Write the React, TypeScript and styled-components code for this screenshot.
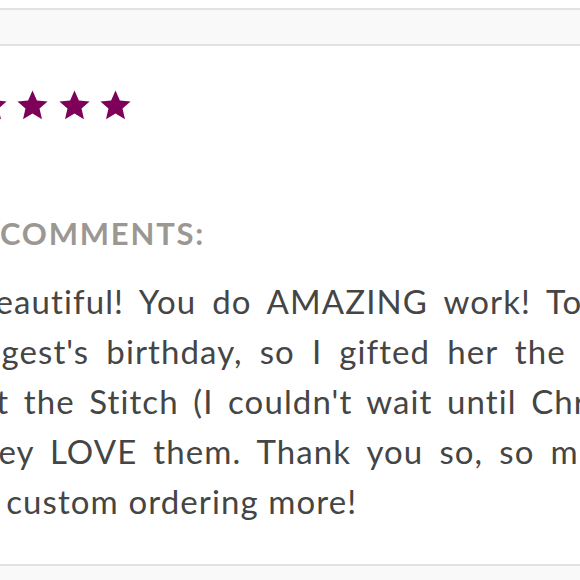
import styled, { createGlobalStyle } from 'styled-components';

const GlobalStyle = createGlobalStyle`
  html, body {
    margin: 0;
    padding: 0;
    background: #ffffff;
    overflow: hidden;
  }
  body {
    font-family: Lato, "Open Sans", Arial, sans-serif;
  }
`;

const Page = styled.div`
  width: 580px;
  height: 580px;
  overflow: hidden;
  display: flex;
  flex-direction: column;
`;

const Strip = styled.div<{ $top?: boolean }>`
  flex: ${(props) => (props.$top ? '0 0 34px' : '1 1 auto')};
  margin-top: ${(props) => (props.$top ? '8px' : '0')};
  background: #f9f9f9;
  border-top: 2px solid #e4e1e0;
  border-bottom: ${(props) => (props.$top ? '2px solid #e4e1e0' : 'none')};
`;

const Review = styled.section`
  display: flex;
  flex-direction: column;
  padding: 43px 0 38px;
  background: #ffffff;
`;

const Stars = styled.div`
  display: flex;
  gap: 8.5px;
  margin-left: -67px;
  height: 33px;
`;

const Star = styled.svg`
  width: 33px;
  height: 33px;
  flex: 0 0 33px;
  fill: #7f0058;
`;

const Label = styled.h4`
  margin: 94px 0 0 0;
  font-size: 31px;
  line-height: 34px;
  font-weight: 700;
  letter-spacing: 1.8px;
  color: #9b9792;
  text-transform: uppercase;
  white-space: nowrap;
`;

const Comment = styled.p`
  margin: 26px 0 0;
  font-size: 33px;
  line-height: 50px;
  letter-spacing: 1.1px;
  color: #454545;
`;

// justified text: each line carries its own word spacing
const Line = styled.span<{ $shift: number; $spacing: number }>`
  display: block;
  white-space: nowrap;
  margin-left: ${(props) => props.$shift}px;
  word-spacing: ${(props) => props.$spacing}px;
`;

const lines = [
  { text: "beautiful! You do AMAZING work! Today was", shift: -24, spacing: 6.5 },
  { text: "youngest's birthday, so I gifted her the Lilo", shift: -75, spacing: 7.5 },
  { text: "at the Stitch (I couldn't wait until Christmas)", shift: -21, spacing: 5 },
  { text: "they LOVE them. Thank you so, so much! I", shift: -34, spacing: 6.5 },
  { text: 'to custom ordering more!', shift: -36, spacing: 0 },
];

function StarIcon() {
  return (
    <Star viewBox="0 0 24 24">
      <polygon points="12,1 15.2,8.4 23,9 17.1,14.2 18.9,22 12,17.9 5.1,22 6.9,14.2 1,9 8.8,8.4" />
    </Star>
  );
}

export default function App() {
  return (
    <>
      <GlobalStyle />
      <Page>
        <Strip $top />
        <Review>
          <Stars>
            {[0, 1, 2, 3, 4].map((i) => (
              <StarIcon key={i} />
            ))}
          </Stars>
          <Label>Comments:</Label>
          <Comment>
            {lines.map((line) => (
              <Line key={line.text} $shift={line.shift} $spacing={line.spacing}>
                {line.text}
              </Line>
            ))}
          </Comment>
        </Review>
        <Strip />
      </Page>
    </>
  );
}
